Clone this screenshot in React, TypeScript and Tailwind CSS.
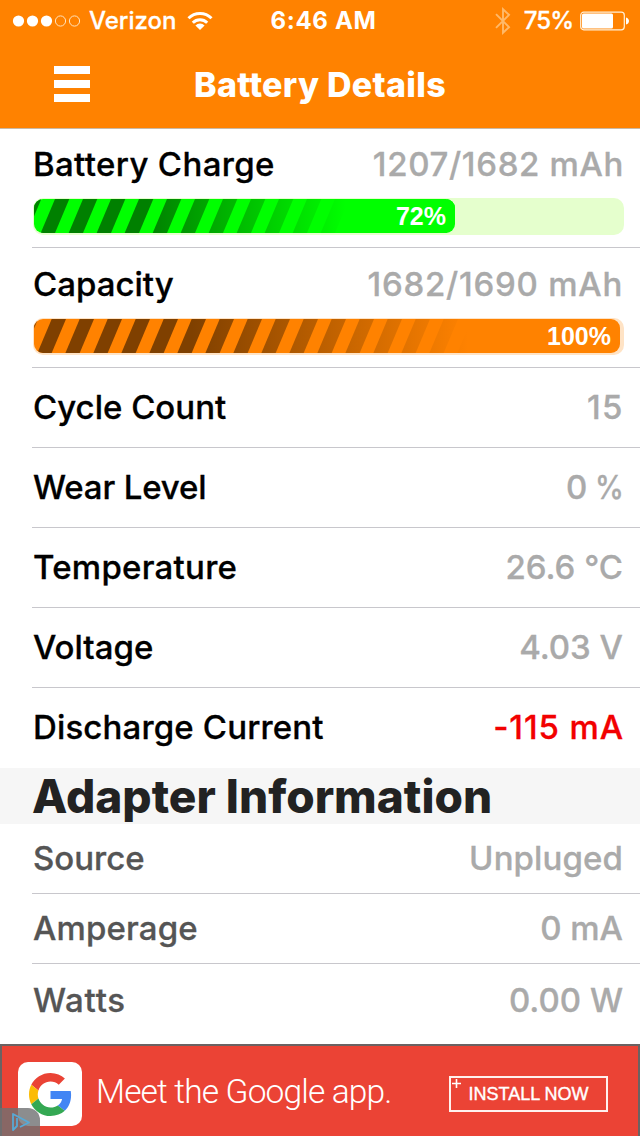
import React from 'react';

type RowProps = {
  label: string;
  value: React.ReactNode;
  className: string;
  labelClass?: string;
  valueClass?: string;
};

function DetailRow({ label, value, className, labelClass = '', valueClass = 'text-[#aaaaaa]' }: RowProps) {
  return (
    <div className={`ml-8 flex items-center justify-between pl-px pr-[17px] ${className}`}>
      <span className={labelClass}>{label}</span>
      <span className={valueClass}>{value}</span>
    </div>
  );
}

type MeterProps = {
  id: string;
  width: number;
  offset: number;
  color: string;
  stripe: string;
  trackClass: string;
  percent: string;
};

function Meter({ id, width, offset, color, stripe, trackClass, percent }: MeterProps) {
  const stripes = Array.from({ length: 19 }, (_, i) => offset + (i - 1) * 28);

  return (
    <div className={`h-[37px] w-[591px] rounded-[10px] pl-px pt-[1.5px] ${trackClass}`}>
      <div className="grid h-[34px] overflow-hidden rounded-[9px]" style={{ width, backgroundColor: color }}>
        <svg className="col-start-1 row-start-1" width={width} height="34">
          <defs>
            <linearGradient id={id} gradientUnits="userSpaceOnUse" x1="0" x2={width} y1="0" y2="0">
              <stop offset="0.27" stopColor={stripe} />
              <stop offset="0.74" stopColor={color} />
            </linearGradient>
          </defs>
          {stripes.map((x) => (
            <polygon key={x} fill={`url(#${id})`} points={`${x},0 ${x + 14.3},0 ${x},34 ${x - 14.3},34`} />
          ))}
        </svg>
        <span className="col-start-1 row-start-1 self-center pr-[9px] text-right font-['Liberation_Sans',sans-serif] text-[25px] font-bold leading-[34px] text-white [-webkit-text-stroke:0]">
          {percent}
        </span>
      </div>
    </div>
  );
}

function StatusBar() {
  return (
    <div className="grid h-10 grid-cols-[1fr_auto_1fr] items-center pl-[12px] pr-[11px] pt-px text-[24px] font-medium leading-10 text-white">
      <div className="flex items-center">
        <svg width="70" height="14" viewBox="0 0 70 14" fill="#fff">
          <circle cx="6.5" cy="7" r="5.6" />
          <circle cx="20.5" cy="7" r="5.6" />
          <circle cx="34.5" cy="7" r="5.6" />
          <circle cx="48.5" cy="7" r="5.1" fill="none" stroke="#ffe3bd" />
          <circle cx="62.5" cy="7" r="5.1" fill="none" stroke="#ffe3bd" />
        </svg>
        <span className="ml-[7px]">Verizon</span>
        <svg className="ml-[11px]" width="26" height="20" viewBox="0 0 26 20" fill="none" stroke="#fff" strokeWidth="3">
          <path d="M1.5 7.3a16.3 16.3 0 0 1 23 0" />
          <path d="M5.8 11.7a10.2 10.2 0 0 1 14.4 0" />
          <path d="M13 19l-4.6-4.6a6.5 6.5 0 0 1 9.2 0z" fill="#fff" stroke="none" />
        </svg>
      </div>
      <span className="pl-[6px] font-bold tracking-[0.65px] [-webkit-text-stroke:0]">6:46 AM</span>
      <div className="flex items-center justify-end">
        <svg width="16" height="28" viewBox="0 0 16 28" fill="none" stroke="#ffb969" strokeWidth="1.9">
          <path d="M1 7.2l13 13L8 25.8V2.2l6 5.6-13 13" />
        </svg>
        <span className="ml-[13px] tracking-[-1px]">75%</span>
        <svg className="ml-[7px]" width="49" height="20" viewBox="0 0 49 20">
          <rect x="0.7" y="1.2" width="43.6" height="17.6" rx="3" fill="none" stroke="#fff0d8" strokeWidth="1.2" />
          <rect x="2" y="2.6" width="31" height="15" rx="1.5" fill="#fff" />
          <path d="M46 6.5c4 1 4 6 0 7z" fill="#fff" />
        </svg>
      </div>
    </div>
  );
}

function GoogleLogo() {
  return (
    <svg width="43" height="43" viewBox="0 0 48 48">
      <path fill="#EA4335" d="M24 9.5c3.54 0 6.71 1.22 9.21 3.6l6.85-6.85C35.9 2.38 30.47 0 24 0 14.62 0 6.51 5.38 2.56 13.22l7.98 6.19C12.43 13.72 17.74 9.5 24 9.5z" />
      <path fill="#4285F4" d="M46.98 24.55c0-1.57-.15-3.09-.38-4.55H24v9.02h12.94c-.58 2.96-2.26 5.48-4.78 7.18l7.73 6c4.51-4.18 7.09-10.36 7.09-17.65z" />
      <path fill="#FBBC05" d="M10.53 28.59c-.48-1.45-.76-2.99-.76-4.59s.27-3.14.76-4.59l-7.98-6.19C.92 16.46 0 20.12 0 24c0 3.88.92 7.54 2.56 10.78l7.97-6.19z" />
      <path fill="#34A853" d="M24 48c6.48 0 11.93-2.13 15.89-5.81l-7.73-6c-2.15 1.45-4.92 2.3-8.16 2.3-6.26 0-11.57-4.22-13.47-9.91l-7.98 6.19C6.51 42.62 14.62 48 24 48z" />
    </svg>
  );
}

function AdBanner() {
  return (
    <div className="relative flex h-[92px] items-start border-x-2 border-t-2 border-[#6b6262] bg-[#eb4335] [-webkit-text-stroke:0]">
      <div className="ml-4 mt-4 flex h-16 w-16 items-center justify-center rounded-[10px] bg-white">
        <GoogleLogo />
      </div>
      <span className="ml-[14px] mt-[25px] whitespace-nowrap font-[Roboto,sans-serif] text-[33.5px] font-light leading-[42px] tracking-[-0.85px] text-white">
        Meet the Google app.
      </span>
      <div className="absolute left-[447px] top-[30px] flex h-[36px] w-[159px] items-center justify-center border-2 border-[#fff1ee] font-['Liberation_Sans',sans-serif] text-[18px] text-white">
        <svg className="absolute left-px top-px" width="9" height="9" stroke="#fff" strokeWidth="1.6">
          <path d="M4.5 0v9M0 4.5h9" />
        </svg>
        <span className="font-normal [-webkit-text-stroke:0.4px_white]">INSTALL NOW</span>
      </div>
      <div className="absolute -left-[2px] bottom-0 flex h-7 w-10 items-center rounded-tr-[12px] bg-[#6f7072]/80 pl-[11px]">
        <svg width="20" height="20" viewBox="0 0 20 20" fill="none" stroke="#58a9d5" strokeWidth="1.8" strokeLinejoin="round">
          <path d="M6 6v8l-4 4V2l16 8.500-9 4.500" />
        </svg>
      </div>
    </div>
  );
}

export default function App() {
  return (
    <div className="flex h-[1136px] w-[640px] flex-col overflow-hidden bg-white font-[Inter,sans-serif] text-[33px] font-medium text-black [-webkit-text-stroke:0.3px_currentColor]">
      <header className="h-[129px] border-b border-[#c9b8a4] bg-[#ff8200]">
        <StatusBar />
        <div className="grid h-[88px] grid-cols-[194px_252px_194px] items-center">
          <div className="ml-[54px] flex w-9 flex-col gap-[6px]">
            <div className="h-2 bg-white" />
            <div className="h-2 bg-white" />
            <div className="h-2 bg-white" />
          </div>
          <h1 className="whitespace-nowrap pt-px text-center text-[34px] font-extrabold tracking-[0.3px] text-white [-webkit-text-stroke:0]">Battery Details</h1>
        </div>
      </header>

      <section className="ml-8 h-[119px] border-b border-[#c8c7cc] pl-px">
        <div className="flex h-[68.5px] items-center justify-between pr-[17px] pt-0.5">
          <span className="tracking-[0.35px]">Battery Charge</span>
          <span className="-mr-px tracking-[0.65px] text-[#aaaaaa]">1207/1682 mAh</span>
        </div>
        <Meter id="charge" width={421} offset={21} color="#00ff00" stripe="#008000" trackClass="bg-[#e5ffcd]" percent="72%" />
      </section>
      <section className="ml-8 h-[120px] border-b border-[#c8c7cc] pl-px">
        <div className="flex h-[69.5px] items-center justify-between pr-[17px] pt-[3px]">
          <span>Capacity</span>
          <span className="tracking-[0.75px] text-[#aaaaaa]">1682/1690 mAh</span>
        </div>
        <Meter id="capacity" width={586} offset={17.7} color="#ff8200" stripe="#7f4000" trackClass="bg-[#ffe3c5]" percent="100%" />
      </section>

      <DetailRow className="h-20 border-b border-[#c8c7cc]" label="Cycle Count" value="15" valueClass="-mr-px tracking-[1.5px] text-[#aaaaaa]" />
      <DetailRow
        className="h-20 border-b border-[#c8c7cc]"
        label="Wear Level"
        value={<>0 <span className="-ml-[5px] inline-block origin-right scale-x-[0.88]">%</span></>}
        labelClass="-tracking-[0.15px]"
        valueClass="-mr-px text-[#aaaaaa]"
      />
      <DetailRow className="h-20 border-b border-[#c8c7cc]" label="Temperature" value="26.6 °C" labelClass="tracking-[0.25px]" />
      <DetailRow className="h-20 border-b border-[#c8c7cc]" label="Voltage" value="4.03 V" />
      <DetailRow className="h-20" label="Discharge Current" value="-115 mA" labelClass="tracking-[0.15px]" valueClass="-mr-px tracking-[0.9px] text-[#f20000]" />

      <h2 className="flex h-14 items-center bg-[#f6f6f6] pl-8 pt-px text-[46px] font-extrabold text-[#222222] [-webkit-text-stroke:0]">Adapter Information</h2>

      <DetailRow className="h-[70px] border-b border-[#c8c7cc]" label="Source" value="Unpluged" labelClass="text-[#555555]" valueClass="tracking-[0.1px] text-[#aaaaaa]" />
      <DetailRow className="h-[70px] border-b border-[#c8c7cc]" label="Amperage" value="0 mA" labelClass="tracking-[0.15px] text-[#555555]" />
      <DetailRow className="h-20 pb-1.5" label="Watts" value="0.00 W" labelClass="tracking-[0.75px] text-[#555555]" />

      <AdBanner />
    </div>
  );
}
